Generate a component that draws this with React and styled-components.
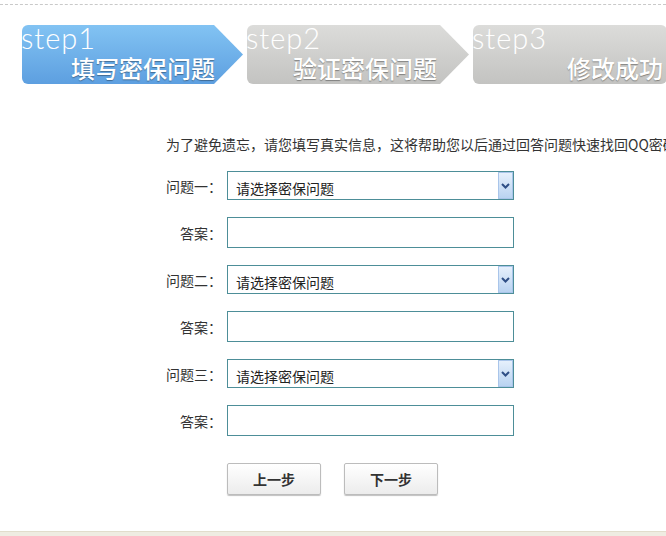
import React from 'react'
import styled, { createGlobalStyle } from 'styled-components'

const GlobalStyle = createGlobalStyle`
  body {
    margin: 0;
    background: #fff;
    font-family: "Noto Sans CJK SC", "DejaVu Sans", sans-serif;
    color: #333;
    overflow: hidden;
  }
`

const steps = [
  { no: 'step1', title: '填写密保问题', active: true, width: 221, right: 28, arrow: true },
  { no: 'step2', title: '验证密保问题', width: 222, right: 32, arrow: true },
  { no: 'step3', title: '修改成功', width: 194, right: 4 },
]

const questions = ['问题一：', '问题二：', '问题三：']

function Chevron() {
  return (
    <svg width="9" height="6" viewBox="0 0 9 6">
      <path d="M1 1 L4.5 4.5 L8 1" fill="none" stroke="#2f4f86" strokeWidth="2" />
    </svg>
  )
}

function App() {
  return (
    <Page>
      <GlobalStyle />
      <Dashed />
      <StepBar>
        {steps.map(s => (
          <Step key={s.no} active={s.active} w={s.width} arrow={s.arrow}>
            <StepNo>{s.no}</StepNo>
            <StepTitle right={s.right}>{s.title}</StepTitle>
          </Step>
        ))}
      </StepBar>
      <Form>
        <Intro>为了避免遗忘，请您填写真实信息，这将帮助您以后通过回答问题快速找回QQ密码</Intro>
        {questions.map(q => (
          <React.Fragment key={q}>
            <Row>
              <Label>{q}</Label>
              <SelectWrap>
                <Select defaultValue="">
                  <option value="">请选择密保问题</option>
                </Select>
                <ArrowBox><Chevron /></ArrowBox>
              </SelectWrap>
            </Row>
            <Row>
              <Label>答案：</Label>
              <Input type="text" />
            </Row>
          </React.Fragment>
        ))}
        <Buttons>
          <Button>上一步</Button>
          <Button>下一步</Button>
        </Buttons>
      </Form>
      <Footer />
    </Page>
  )
}

export default App

const Page = styled.div`
  width: 666px;
  height: 536px;
  display: flex;
  flex-direction: column;
  overflow: hidden;
`

const Dashed = styled.div`
  margin-top: 4px;
  height: 0;
  border-top: 1px dashed #c9c9c9;
`

const StepBar = styled.div`
  display: flex;
  gap: 3px;
  margin: 20px 0 0 22px;
  height: 59px;
`

const Step = styled.div`
  flex: 0 0 ${p => p.w}px;
  display: flex;
  flex-direction: column;
  border-radius: 6px;
  background: ${p => p.active
    ? 'linear-gradient(#82c3f3, #5d9fe0)'
    : 'linear-gradient(#dcdcda, #c3c3c1)'};
  clip-path: ${p => p.arrow
    ? 'polygon(0 0, calc(100% - 29px) 0, 100% 50%, calc(100% - 29px) 100%, 0 100%)'
    : 'none'};
  margin-right: ${p => p.arrow ? '1px' : '0'};
`

const StepNo = styled.div`
  font-family: "Lato", "DejaVu Sans", sans-serif;
  font-weight: 300;
  font-size: 29px;
  line-height: 26px;
  letter-spacing: 1px;
  color: #fff;
  margin-left: -1px;
`

const StepTitle = styled.div`
  margin-top: 4px;
  padding-right: ${p => p.right}px;
  text-align: right;
  font-size: 24px;
  line-height: 26px;
  font-weight: 500;
  color: #fff;
  text-shadow: 0 1px 1px rgba(0, 0, 0, 0.35);
`

const Form = styled.div`
  margin: 50px 0 0 166px;
  display: flex;
  flex-direction: column;
  gap: 17px;
`

const Intro = styled.div`
  font-size: 14px;
  line-height: 20px;
  white-space: nowrap;
`

const Row = styled.div`
  display: flex;
  align-items: center;
`

const Label = styled.div`
  width: 61px;
  padding-right: 5px;
  box-sizing: border-box;
  text-align: right;
  font-size: 14px;
  white-space: nowrap;
`

const SelectWrap = styled.div`
  position: relative;
  width: 287px;
  height: 29px;
`

const Select = styled.select`
  appearance: none;
  width: 100%;
  height: 100%;
  box-sizing: border-box;
  border: 1px solid #4d8e98;
  border-radius: 0;
  background: #fff;
  padding: 4px 0 0 8px;
  font-family: inherit;
  font-size: 14px;
  color: #222;
  outline: none;
`

const ArrowBox = styled.div`
  position: absolute;
  top: 1px;
  right: 1px;
  bottom: 1px;
  width: 15px;
  box-sizing: border-box;
  border: 1px solid #a9c5ea;
  background: linear-gradient(#e6f0fc, #b9d3f1);
  display: flex;
  align-items: center;
  justify-content: center;
  pointer-events: none;
`

const Input = styled.input`
  width: 287px;
  height: 31px;
  box-sizing: border-box;
  border: 1px solid #4d8e98;
  outline: none;
  padding: 0 6px;
  font-size: 14px;
`

const Buttons = styled.div`
  display: flex;
  gap: 23px;
  margin: 10px 0 0 61px;
`

const Button = styled.button`
  width: 94px;
  height: 32px;
  border: 1px solid #bcbcbc;
  border-radius: 2px;
  background: linear-gradient(#ffffff, #ececec);
  box-shadow: 0 1px 1px rgba(0, 0, 0, 0.25);
  font-family: "Noto Sans CJK SC", sans-serif;
  font-size: 14px;
  font-weight: bold;
  color: #333;
  cursor: pointer;
`

const Footer = styled.div`
  margin-top: auto;
  height: 4px;
  border-top: 1px solid #e2ddcc;
  background: #efece2;
`
